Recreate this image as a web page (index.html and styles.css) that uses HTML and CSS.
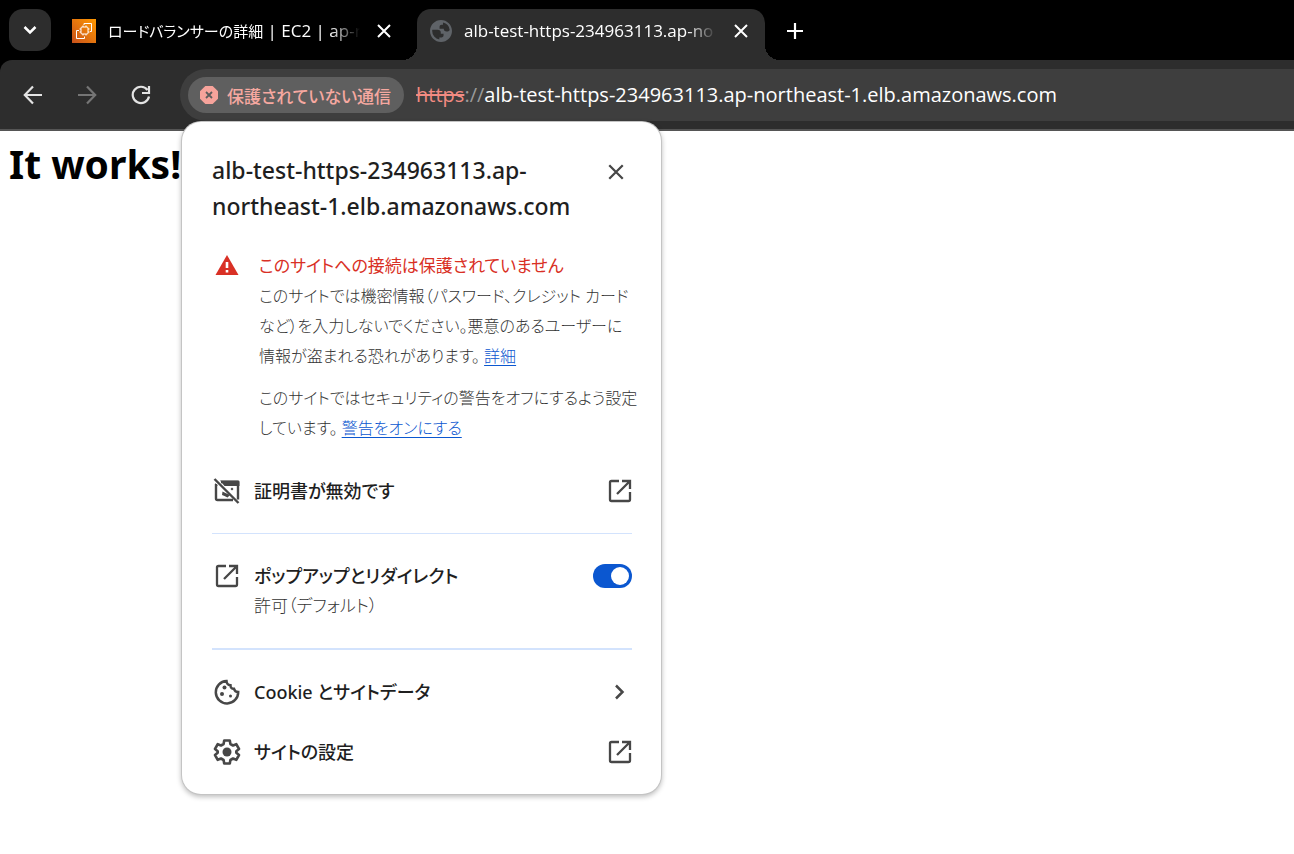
FILE: index.html
```html
<!DOCTYPE html>
<html lang="ja">
<head>
  <meta charset="UTF-8" />
  <meta name="viewport" content="width=device-width, initial-scale=1.0"/>
  <title>alb-test-https-234963113.ap-northeast-1.elb.amazonaws.com</title>
  <link rel="stylesheet" href="styles.css">
</head>
<body>

  <svg class="symbols" aria-hidden="true">
    <symbol id="icon-x" viewBox="0 0 16 16">
      <path d="M2 2l12 12M14 2L2 14" fill="none" stroke="currentColor" stroke-width="2"/>
    </symbol>
    <symbol id="icon-launch" viewBox="0 0 24 24">
      <path d="M11 2H3.500A1.500 1.500 0 0 0 2 3.500v17A1.500 1.500 0 0 0 3.500 22h17a1.500 1.500 0 0 0 1.500-1.500V13M14 2h8v8M22 2L9 15" fill="none" stroke="currentColor" stroke-width="2.300"/>
    </symbol>
  </svg>

  <header class="browser">
    <div class="tab-strip">
      <button class="tab-search" aria-label="タブを検索">
        <svg width="14" height="10" viewBox="0 0 14 10"><path d="M1.500 2L7 7.500 12.500 2" fill="none" stroke="currentColor" stroke-width="2.500"/></svg>
      </button>
      <div class="tab">
        <svg class="favicon" width="24" height="24" viewBox="0 0 24 24">
          <defs>
            <linearGradient id="ec2" x1="0" y1="1" x2="1" y2="0">
              <stop offset="0" stop-color="#c8511b"/>
              <stop offset="1" stop-color="#f90"/>
            </linearGradient>
          </defs>
          <rect width="24" height="24" fill="url(#ec2)"/>
          <g fill="none" stroke="#fff">
            <rect x="9" y="8" width="7" height="7" rx="1"/>
            <path d="M11 6.500V8M14 6.500V8M11 15v1.500M14 15v1.500M7.500 10H9M7.500 13H9M16 10h1.500M16 13h1.500"/>
            <path d="M12 4.500H19.500V12.500H18M13 4.500h-1V6M7 11.500H4.500V19.500H12.500V17.500"/>
          </g>
        </svg>
        <span class="tab-title"><span class="ja">ロードバランサーの詳細</span> | EC2 | ap-n</span>
        <button class="tab-close" aria-label="閉じる"><svg width="16" height="16"><use href="#icon-x"/></svg></button>
      </div>
      <div class="tab active">
        <svg class="favicon" width="22" height="22" viewBox="2 2 20 20">
          <path fill="#5f6368" d="M12 2C6.480 2 2 6.480 2 12s4.480 10 10 10 10-4.480 10-10S17.520 2 12 2zm-1.500 17.800A7.900 7.900 0 0 1 4 12c0-.4 0-.8.1-1.200h4.700c2 0 3 .9 3 2.500v1.200h2.500v1.700c0 1-.8 1.600-1.800 1.600h-2v2zM19.900 11c-.6.8-1.500 1.500-2.800 1.500-1.600 0-2.600-1-2.600-2.500h-3.800V8.300c0-1.100.8-1.900 1.900-1.900h1.200V4.300A7.900 7.900 0 0 1 19.900 11z"/>
        </svg>
        <span class="tab-title">alb-test-https-234963113.ap-no</span>
        <button class="tab-close" aria-label="閉じる"><svg width="16" height="16"><use href="#icon-x"/></svg></button>
      </div>
      <button class="new-tab" aria-label="新しいタブ">
        <svg width="16" height="16" viewBox="0 0 16 16"><path d="M8 0v16M0 8h16" stroke="currentColor" stroke-width="2.200"/></svg>
      </button>
    </div>

    <div class="toolbar">
      <nav class="nav-buttons">
        <button aria-label="戻る">
          <svg width="20" height="20" viewBox="0 0 20 20"><path d="M19 10H2M10 1.500L1.800 10l8.200 8.500" fill="none" stroke="currentColor" stroke-width="2.200"/></svg>
        </button>
        <button class="off" aria-label="進む" disabled>
          <svg width="20" height="20" viewBox="0 0 20 20"><path d="M1 10h17M10 1.500L18.200 10 10 18.500" fill="none" stroke="currentColor" stroke-width="2.200"/></svg>
        </button>
        <button aria-label="再読み込み">
          <svg width="20" height="20" viewBox="0 0 20 20"><path d="M16.500 5A8.200 8.200 0 1 0 18 11.500M18 1v7h-7" fill="none" stroke="currentColor" stroke-width="2.200"/></svg>
        </button>
      </nav>

      <div class="omnibox">
        <button class="security-chip">
          <svg width="18" height="18" viewBox="0 0 18 18">
            <path d="M5.300 0h7.400L18 5.300v7.400L12.700 18H5.300L0 12.700V5.300z" fill="#f6a39b"/>
            <path d="M6 6l6 6M12 6l-6 6" stroke="#5c5c5c" stroke-width="1.800"/>
          </svg>
          保護されていない通信
        </button>
        <div class="url"><s>https</s><span class="slashes">://</span>alb-test-https-234963113.ap-northeast-1.elb.amazonaws.com</div>

        <section class="page-info">
          <div class="info-header">
            <h2>alb-test-https-234963113.ap-northeast-1.elb.amazonaws.com</h2>
            <button class="info-close" aria-label="閉じる"><svg width="18" height="18"><use href="#icon-x"/></svg></button>
          </div>

          <div class="warning">
            <svg class="warning-icon" width="24" height="20" viewBox="0 0 24 20">
              <path d="M12 0l11.500 20H.5z" fill="#d93025"/>
              <path d="M12 7v6M12 15v2.500" stroke="#fff" stroke-width="2.600"/>
            </svg>
            <div class="warning-text">
              <h3>このサイトへの接続は保護されていません</h3>
              <p>このサイトでは機密情報（パスワード、クレジット カード<br>など）を入力しないでください。悪意のあるユーザーに<br>情報が盗まれる恐れがあります。 <a href="#">詳細</a></p>
              <p>このサイトではセキュリティの警告をオフにするよう設定<br>しています。 <a href="#">警告をオンにする</a></p>
            </div>
          </div>

          <button class="row">
            <svg width="28" height="26" viewBox="0 0 28 26">
              <path d="M3 6v14.500A1.500 1.500 0 0 0 4.500 22H20M8 4h17v17.500" fill="none" stroke="currentColor" stroke-width="2.400"/>
              <path d="M7 2.500h18a1.500 1.500 0 0 1 1.500 1.500v4H11.500zM2 5l3 3H2z" fill="currentColor"/>
              <path d="M9.500 13.500l3 1.500 4.500 2-2.500 2.500-3-1.500-2.500-1zM17.500 11l1.500-1.500 1.500 1.500-1.500 1.500z" fill="currentColor"/>
              <path d="M1.500 1l24 24" stroke="currentColor" stroke-width="2.400"/>
            </svg>
            <span class="label">証明書が無効です</span>
            <svg width="24" height="24"><use href="#icon-launch"/></svg>
          </button>

          <div class="row permission">
            <svg width="28" height="30" viewBox="-2 -3 28 30"><use href="#icon-launch" width="24" height="24"/></svg>
            <label class="label" for="popups">ポップアップとリダイレクト<small>許可（デフォルト）</small></label>
            <input class="switch" type="checkbox" id="popups" checked>
          </div>

          <button class="row">
            <svg width="28" height="28" viewBox="-1 -1 28 28">
              <path d="M12.500 2A11.200 11.200 0 1 0 24.200 13c-2 0-3.700-1-4.200-3.200-2.200.2-3.700-1.300-3.500-3.500-2.400-.3-3.900-1.900-4-4.300z" fill="none" stroke="currentColor" stroke-width="2.500"/>
              <circle cx="10.500" cy="8.500" r="2" fill="currentColor"/>
              <circle cx="8" cy="15" r="2" fill="currentColor"/>
              <circle cx="16.500" cy="17" r="1.500" fill="currentColor"/>
            </svg>
            <span class="label">Cookie とサイトデータ</span>
            <svg width="24" height="16" viewBox="0 0 24 16"><path d="M8 1.500L14.500 8 8 14.500" fill="none" stroke="currentColor" stroke-width="2.500"/></svg>
          </button>

          <button class="row">
            <svg width="28" height="28" viewBox="0 0 28 28">
              <path d="M11.200 2.500h5.600l.6 3.500 2.600 1.500 3.300-1.300 2.700 4.800-2.700 2.200v1.600l2.700 2.200-2.700 4.800-3.300-1.300-2.600 1.500-.6 3.500h-5.600l-.6-3.500L8 20.500l-3.300 1.300L2 17l2.700-2.200v-1.600L2 11l2.700-4.800L8 7.500 10.600 6z" fill="none" stroke="currentColor" stroke-width="2.600" stroke-linejoin="round"/>
              <circle cx="14" cy="14" r="4.500" fill="currentColor"/>
            </svg>
            <span class="label">サイトの設定</span>
            <svg width="24" height="24"><use href="#icon-launch"/></svg>
          </button>
        </section>
      </div>
    </div>
  </header>

  <main>
    <h1>It works!</h1>
  </main>

</body>
</html>
```
FILE: styles.css
```css
* {
  margin: 0;
  padding: 0;
  box-sizing: border-box;
}

body {
  min-height: 100vh;
  font-family: "Open Sans", "Noto Sans CJK JP", sans-serif;
  font-feature-settings: "palt";
  background-color: #fff;
  color: #1f1f1f;
}

button {
  font: inherit;
  font-feature-settings: inherit;
  color: inherit;
  background: none;
  border: none;
  cursor: pointer;
}

svg {
  display: block;
  flex-shrink: 0;
}

.symbols {
  display: none;
}

.browser {
  background-color: #000;
}

/* tabs */
.tab-strip {
  display: flex;
  height: 60px;
  padding: 9px 8px 0 9px;
  color: #fff;
}

.tab-search {
  display: grid;
  place-items: center;
  width: 42px;
  height: 42px;
  border-radius: 14px;
  background-color: #2d2d2d;
}

.tab {
  display: flex;
  align-items: center;
  width: 348px;
  padding: 0 16px 8px 13px;
  font-size: 17px;
}

.tab:not(.active) {
  width: 366px;
  padding-left: 21px;
  padding-right: 25px;
}

.tab.active {
  position: relative;
  background-color: #2d2d2d;
  border-radius: 14px 14px 0 0;
}

.tab.active::before,
.tab.active::after {
  content: "";
  position: absolute;
  bottom: 0;
  width: 15px;
  height: 15px;
}

.tab.active::before {
  right: 100%;
  background: radial-gradient(circle at 0 0, transparent 15px, #2d2d2d 15px);
}

.tab.active::after {
  left: 100%;
  background: radial-gradient(circle at 100% 0, transparent 15px, #2d2d2d 15px);
}

.tab-title {
  flex: 1;
  margin: 0 16px 0 12px;
  overflow: hidden;
  white-space: nowrap;
  mask-image: linear-gradient(to right, #000 88%, transparent);
}

.tab-title .ja {
  font-size: 15px;
}

.new-tab {
  padding: 0 22px 8px;
}

/* toolbar */
.toolbar {
  display: flex;
  height: 71px;
  padding-top: 9px;
  background-color: #2d2d2d;
  border-bottom: 2px solid #555;
  border-top-left-radius: 12px;
}

.nav-buttons {
  display: flex;
  gap: 34px;
  width: 180px;
  height: 52px;
  padding-left: 23px;
  color: #e3e3e3;
}

.nav-buttons .off {
  color: #757575;
}

.omnibox {
  position: relative;
  flex: 1;
  display: flex;
  align-items: center;
  gap: 12px;
  height: 52px;
  padding-left: 8px;
  background-color: #3e3e3e;
  border-radius: 26px 0 0 26px;
}

.security-chip {
  display: flex;
  align-items: center;
  gap: 9px;
  height: 36px;
  padding: 0 13px 0 12px;
  border-radius: 18px;
  background-color: #5f5f5f;
  color: #f6a8a0;
  font-size: 17px;
  font-weight: 500;
  white-space: nowrap;
}

.url {
  padding-bottom: 2px;
  color: #fff;
  font-size: 20px;
  white-space: nowrap;
}

.url s {
  color: #f28b82;
}

.url .slashes {
  color: #9a9a9a;
}

/* page info popup */
.page-info {
  position: absolute;
  top: 53px;
  left: 2px;
  z-index: 10;
  width: 479px;
  padding: 30px 0 12px;
  border-radius: 19px;
  background-color: #fff;
  color: #474747;
  box-shadow: 0 0 0 1px #c4c4c4, 0 2px 5px 1px rgba(0, 0, 0, 0.25);
}

.info-header {
  display: flex;
  justify-content: space-between;
  padding: 0 36px 0 30px;
}

.info-header h2 {
  width: 360px;
  color: #1f1f1f;
  font-family: "Noto Sans", sans-serif;
  font-size: 23px;
  font-weight: 500;
  line-height: 36px;
}

.info-close {
  height: 40px;
}

.warning {
  display: flex;
  gap: 20px;
  padding: 27px 0 18px 33px;
}

.warning-icon {
  margin-top: 4px;
}

.warning-text {
  color: #333;
  font-size: 16px;
  font-weight: 300;
  line-height: 30px;
  white-space: nowrap;
}

.warning-text h3 {
  color: #d93025;
  font-size: 17px;
  font-weight: 400;
}

.warning-text p + p {
  margin-top: 12px;
}

.warning-text a {
  color: #0b57d0;
  text-underline-offset: 3px;
}

.row {
  display: flex;
  align-items: center;
  gap: 13px;
  width: 100%;
  height: 60px;
  padding: 0 29px 0 31px;
  text-align: left;
}

.label {
  flex: 1;
  color: #1f1f1f;
  font-family: "Noto Sans", "Noto Sans CJK JP", sans-serif;
  font-size: 18px;
  font-weight: 500;
  line-height: 30px;
}

.label small {
  display: block;
  color: #333;
  font-size: 17px;
  font-weight: 300;
}

.permission {
  position: relative;
  align-items: flex-start;
  height: auto;
  margin: 12px 0;
  padding-top: 28px;
  padding-bottom: 29px;
}

.permission::before,
.permission::after {
  content: "";
  position: absolute;
  left: 30px;
  right: 29px;
  height: 1px;
  background-color: #d3e3fd;
}

.permission::before {
  top: 0;
}

.permission::after {
  bottom: 0;
  height: 2px;
}

.switch {
  appearance: none;
  display: flex;
  align-items: center;
  justify-content: flex-end;
  width: 39px;
  height: 24px;
  margin-top: 3px;
  padding: 0 3px;
  border-radius: 12px;
  background-color: #0b57d0;
}

.switch::before {
  content: "";
  width: 18px;
  height: 18px;
  border-radius: 50%;
  background-color: #fff;
}

main {
  padding: 6px 9px;
}

h1 {
  font-family: "Noto Sans", sans-serif;
  color: #000;
  font-size: 39px;
  line-height: 54px;
}
```
